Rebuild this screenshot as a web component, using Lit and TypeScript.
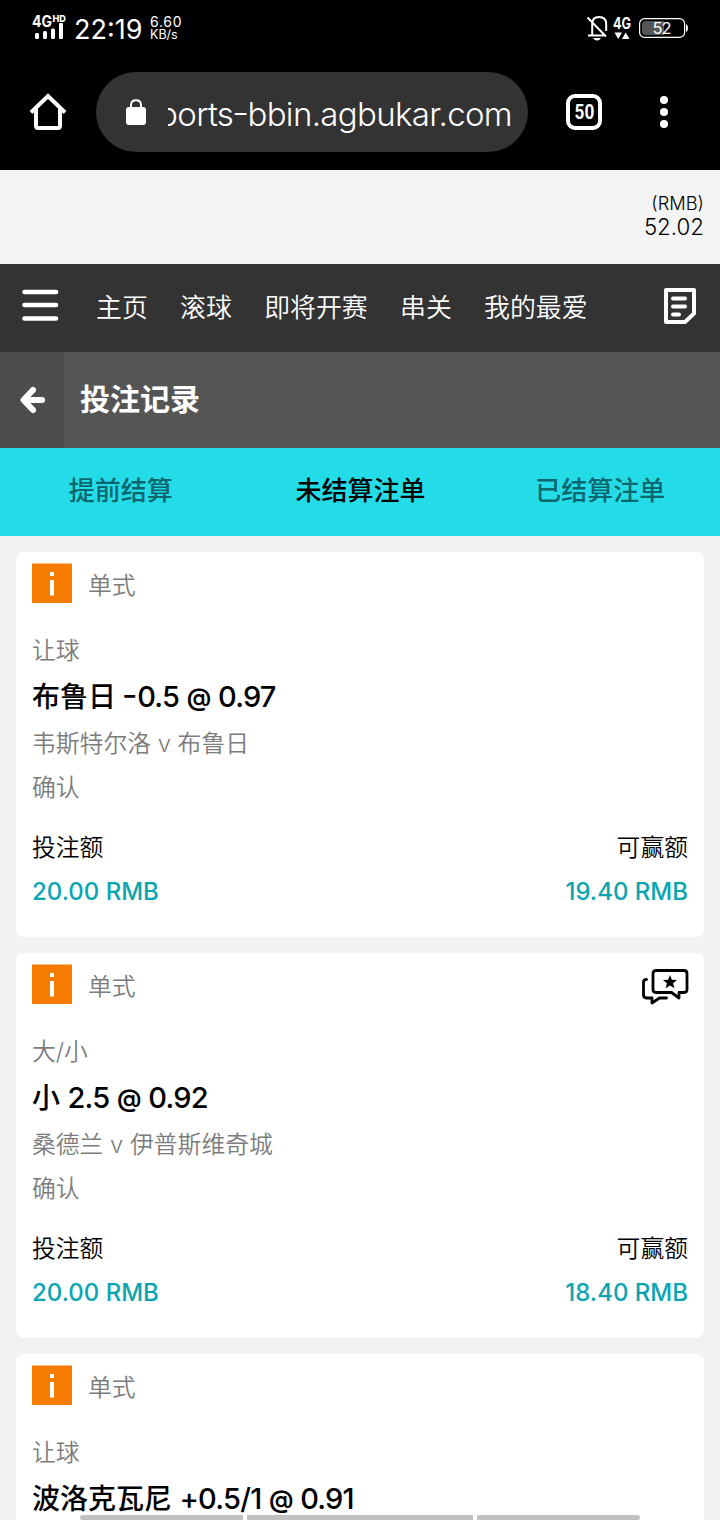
import { LitElement, html, css, nothing } from "lit";
import { customElement, property } from "lit/decorators.js";

interface Bet {
  market: string;
  team: string;
  sign: string;
  line: string;
  price: string;
  match: string;
  win: string;
  chat: boolean;
}

const BETS: Bet[] = [
  { market: "让球", team: "布鲁日", sign: "-", line: "0.5", price: "0.97", match: "韦斯特尔洛 v 布鲁日", win: "19.40 RMB", chat: false },
  { market: "大/小", team: "小", sign: "", line: "2.5", price: "0.92", match: "桑德兰 v 伊普斯维奇城", win: "18.40 RMB", chat: true },
  { market: "让球", team: "波洛克瓦尼", sign: "+", line: "0.5/1", price: "0.91", match: "", win: "", chat: false },
];

@customElement("status-bar")
class StatusBar extends LitElement {
  static styles = css`
    :host { display: flex; height: 56px; padding: 0 32px; align-items: center; justify-content: space-between; color: #fff; box-sizing: border-box; }
    .side { display: flex; align-items: center; height: 56px; }
    svg { display: block; overflow: visible; }
    .net { font: 700 15.5px Inter, sans-serif; }
    .hd { font: 800 9.5px Inter, sans-serif; }
    .clock { font: 400 27px/56px Inter, sans-serif; margin: 3px 0 0 8px; width: 68px; white-space: nowrap; }
    .rate { font: 400 12.5px/12px Inter, sans-serif; margin: 0 0 0 8px; white-space: nowrap; }
    .big { font-size: 14px; line-height: 14px; letter-spacing: 0.7px; }
    .pct { font: 400 16.5px Inter, sans-serif; }
  `;
  render() {
    return html`
      <div class="side">
        <svg width="34" height="56" viewBox="0 0 34 56" fill="#fff">
          <text class="net" x="0" y="27" textLength="20" lengthAdjust="spacingAndGlyphs">4G</text>
          <text class="hd" x="20.500" y="22" textLength="13.500" lengthAdjust="spacingAndGlyphs">HD</text>
          <rect x="3" y="33" width="4" height="6" rx="1.500" /><rect x="11" y="31" width="4" height="8" rx="1.500" />
          <rect x="19" y="28.500" width="4" height="10.500" rx="1.500" /><rect x="27" y="23" width="4" height="16" rx="1" />
        </svg>
        <div class="clock">22:19</div>
        <div class="rate"><div class="big">6.60</div><div>KB/s</div></div>
      </div>
      <div class="side">
        <svg width="101" height="56" viewBox="0 0 101 56" fill="none" stroke="#fff" stroke-width="2">
          <path d="M1 35.500H5.200V24Q5.200 17 12 17Q19.200 17 19.200 24V31M4 35.500H17M0.500 17.500L19 36.500" />
          <path d="M6 38H14Q12.500 40.500 10 40.500T6 38Z" fill="#fff" stroke="none" />
          <text class="net" x="26" y="29" textLength="18" lengthAdjust="spacingAndGlyphs" fill="#fff" stroke="none">4G</text>
          <path d="M27.500 32.500H35L31.200 39ZM35 39H42.500L38.700 32.500Z" fill="#fff" stroke="none" />
          <rect x="52.600" y="18.600" width="45" height="18.800" rx="5" stroke-width="1.200" />
          <path d="M59 21H77V35H59Q55 35 55 31V25Q55 21 59 21Z" fill="#555" stroke="none" />
          <path d="M99 24Q101 25 101 28T99 32Z" fill="#fff" stroke="none" />
          <text class="pct" x="65.500" y="34" textLength="19" fill="#fff" stroke="none">52</text>
        </svg>
      </div>`;
  }
}

@customElement("browser-bar")
class BrowserBar extends LitElement {
  static styles = css`
    :host { display: flex; height: 114px; padding: 16px 28px 18px; box-sizing: border-box; align-items: center; color: #fff; }
    svg { display: block; flex: none; }
    .home { width: 40px; height: 40px; }
    .pill { display: flex; align-items: center; width: 432px; height: 80px; margin-left: 28px; padding: 0 16px 0 28px; background: #333; border-radius: 40px; box-sizing: border-box; }
    .url { flex: 1; display: flex; justify-content: flex-end; overflow: hidden; margin-left: 20px; font: 300 33px/60px Inter, sans-serif; letter-spacing: -0.65px; white-space: nowrap; padding-top: 4px; }
    .dash { display: inline-block; transform: translateY(-2px) scaleX(1.15); }
    .tabs { display: flex; align-items: center; justify-content: center; width: 36px; height: 36px; border: 4px solid #fff; border-radius: 9px; box-sizing: border-box; margin-left: 38px; font: 700 20px "Roboto", sans-serif; }
    .count { transform: scaleX(0.86); }
    .more { margin-left: 56px; }
  `;
  render() {
    return html`
      <svg class="home" viewBox="0 0 40 40" fill="none" stroke="#fff" stroke-width="4">
        <path d="M3 20.500L20 4L37 20.500" stroke-linejoin="miter" /><path d="M8 17V34Q8 36 10 36H30Q32 36 32 34V17" />
      </svg>
      <div class="pill">
        <svg width="24" height="30" viewBox="0 0 24 30">
          <rect x="2" y="10" width="20" height="18" rx="3" fill="#fff" /><path d="M7 11V8Q7 3.200 12 3.200T17 8V11" fill="none" stroke="#fff" stroke-width="2" />
        </svg>
        <div class="url"><span>ports<span class="dash">-</span>bbin.agbukar.com</span></div>
      </div>
      <div class="tabs"><span class="count">50</span></div>
      <svg class="more" width="12" height="36" viewBox="0 0 12 36" fill="#fff"><circle cx="6" cy="6" r="4" /><circle cx="6" cy="18" r="4" /><circle cx="6" cy="30" r="4" /></svg>`;
  }
}

@customElement("bet-card")
class BetCard extends LitElement {
  @property({ attribute: false }) bet!: Bet;
  static styles = css`
    :host { display: block; height: 385px; flex: none; box-sizing: border-box; padding: 0 16px; background: #fff; border-radius: 8px; font: 350 23.8px/44px Inter, "Noto Sans CJK SC", sans-serif; color: #7c7c7c; white-space: nowrap; }
    .head { display: flex; height: 64px; padding: 11px 0 0; box-sizing: border-box; align-items: flex-start; margin-bottom: 13px; }
    .badge { width: 40px; height: 40px; display: block; }
    .kind { margin: 1px 0 0 16px; }
    .chat { margin: 4px -1px 0 auto; }
    .pick { font-weight: 500; font-size: 28px; line-height: 47px; height: 49px; color: #000; }
    .odds { font-size: 29px; letter-spacing: -0.75px; }
    .minus { display: inline-block; transform: translateY(-2px) scaleX(1.15); margin-right: 1px; }
    .at { font-size: 24.5px; font-weight: 600; position: relative; top: -1px; margin: 0 0.5px; }
    .row { display: flex; justify-content: space-between; color: #000; }
    .labels { margin-top: 16px; }
    .money { font-weight: 500; font-size: 24px; color: #0ba5b1; }
  `;
  render() {
    const b = this.bet;
    const sign = b.sign === "-" ? html`<span class="minus">-</span>` : b.sign;
    return html`
      <div class="head">
        <svg class="badge" viewBox="0 0 40 40"><path d="M0 .5H40V40H0Z" fill="#f57c00" /><path d="M18 9h4v4h-4zM18 17h4V32.500h-4z" fill="#fff" /></svg>
        <span class="kind">单式</span>
        ${b.chat
          ? html`<svg class="chat" width="48" height="38" viewBox="0 0 48 38" fill="none" stroke="#000" stroke-width="2.800" stroke-linejoin="round" stroke-linecap="round">
              <path d="M15 2.500H43Q46 2.500 46 5.500V21.500Q46 24.500 43 24.500H38V30L30.500 24.500H15Q12 24.500 12 21.500V5.500Q12 2.500 15 2.500Z" />
              <path d="M5.500 11.500Q2.500 11.500 2.500 14V26.500Q2.500 30 5.500 30H11V35L18.500 30H25.500" />
              <path d="M29 7L30.900 11.700L36 12L32.100 15.300L33.400 20.200L29 17.500L24.600 20.200L25.900 15.300L22 12L27.100 11.700Z" fill="#000" stroke="none" />
            </svg>`
          : nothing}
      </div>
      <div>${b.market}</div>
      <div class="pick">${b.team} <span class="odds">${sign}${b.line} <span class="at">@</span> ${b.price}</span></div>
      ${b.match
        ? html`<div>${b.match}</div>
            <div>确认</div>
            <div class="row labels"><span>投注额</span><span>可赢额</span></div>
            <div class="row money"><span>20.00 RMB</span><span>${b.win}</span></div>`
        : nothing}`;
  }
}

@customElement("app-root")
class AppRoot extends LitElement {
  static styles = css`
    :host { display: flex; flex-direction: column; position: relative; width: 720px; height: 1520px; overflow: hidden; background: #f2f2f2; font-family: Inter, "Noto Sans CJK SC", sans-serif; }
    .top { background: #000; height: 170px; flex: none; }
    .balance { height: 94px; flex: none; background: #f4f4f4; padding: 21px 16px 0; box-sizing: border-box; text-align: right; font-weight: 300; font-size: 22.3px; line-height: 24px; color: #000; }
    .cur { font-size: 18.3px; }
    .nav { display: flex; align-items: center; height: 88px; flex: none; padding: 0 22px 5px; background: #333; color: #fff; font-size: 25.900px; font-weight: 350; box-sizing: border-box; }
    .links { display: flex; gap: 32.300px; margin-left: 37px; flex: 1; }
    .title { display: flex; height: 96px; flex: none; background: #555; color: #fff; font-size: 30px; line-height: 95px; font-weight: 700; }
    .back { display: flex; align-items: center; justify-content: center; width: 64px; background: #4d4d4d; margin-right: 16px; }
    .tabs { display: grid; grid-template-columns: repeat(3, 1fr); height: 88px; flex: none; background: #24dce8; font-size: 26px; line-height: 86px; font-weight: 500; text-align: center; color: #0b666d; padding-left: 1px; }
    .on { color: #000; }
    .cards { display: flex; flex-direction: column; gap: 16px; padding: 16px; }
    .strip { position: absolute; left: 80px; top: 1515px; width: 560px; height: 5px; display: grid; grid-template-columns: 163px 226px 163px; gap: 4px; border-radius: 3px; overflow: hidden; background: #fff; }
    .seg { background: #c1c1c1; }
  `;
  render() {
    return html`
      <div class="top"><status-bar></status-bar><browser-bar></browser-bar></div>
      <div class="balance"><div class="cur">(RMB)</div><div>52.02</div></div>
      <div class="nav">
        <svg width="37" height="34" viewBox="0 0 37 34" stroke="#fff" stroke-width="4.600" stroke-linecap="round"><path d="M2.500 3H34M2.500 16H34M2.500 29.500H34" /></svg>
        <div class="links"><span>主页</span><span>滚球</span><span>即将开赛</span><span>串关</span><span>我的最爱</span></div>
        <svg width="36" height="38" viewBox="0 0 36 38" fill="none" stroke="#fff" stroke-width="4">
          <path d="M4 3H32V26.500L23 35H4Z" stroke-linejoin="round" /><path d="M11 11.500H23M11 19.500H23M11 27.500H17" stroke-linecap="round" />
        </svg>
      </div>
      <div class="title">
        <div class="back"><svg width="28" height="30" viewBox="0 0 28 30" fill="none" stroke="#fff" stroke-width="6" stroke-linecap="round" stroke-linejoin="round"><path d="M15 5L5.500 15L15 25M6 15H24" /></svg></div>
        <span>投注记录</span>
      </div>
      <div class="tabs"><span>提前结算</span><span class="on">未结算注单</span><span>已结算注单</span></div>
      <div class="cards">${BETS.map((b) => html`<bet-card .bet=${b}></bet-card>`)}</div>
      <div class="strip"><div class="seg"></div><div class="seg"></div><div class="seg"></div></div>`;
  }
}
